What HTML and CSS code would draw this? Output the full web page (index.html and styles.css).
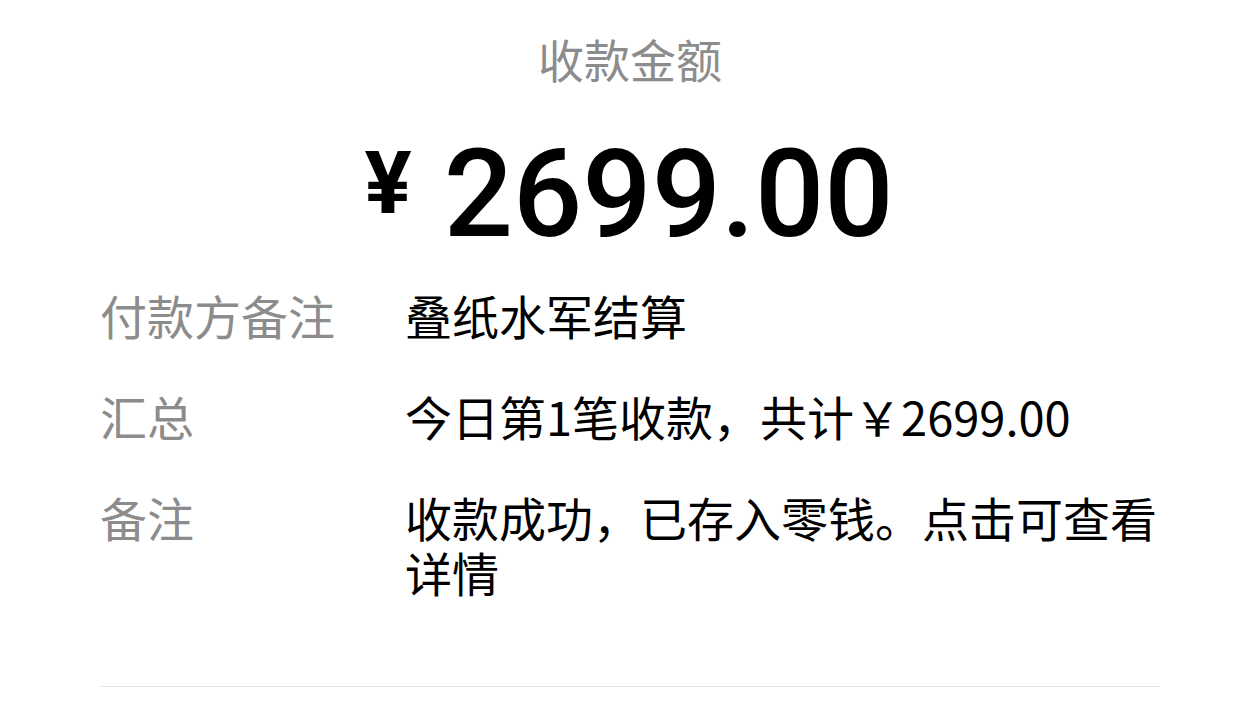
FILE: index.html
```html
<!DOCTYPE html>
<html lang="zh-CN">
<head>
  <meta charset="UTF-8">
  <meta name="viewport" content="width=device-width, initial-scale=1.0">
  <title>收款详情</title>
  <link rel="stylesheet" href="styles.css">
</head>
<body>
  <main class="receipt">
    <h1 class="receipt-title">收款金额</h1>

    <div class="amount">
      <span class="amount-sign">¥</span>
      <span class="amount-value">2699.00</span>
    </div>

    <dl class="details">
      <div class="detail-row">
        <dt>付款方备注</dt>
        <dd>叠纸水军结算</dd>
      </div>
      <div class="detail-row">
        <dt>汇总</dt>
        <dd>今日第1笔收款，共计￥2699.00</dd>
      </div>
      <div class="detail-row">
        <dt>备注</dt>
        <dd>收款成功，已存入零钱。点击可查看详情</dd>
      </div>
    </dl>

    <hr class="divider">
  </main>
</body>
</html>
```

FILE: styles.css
```css
body {
  margin: 0;
  background: #fff;
  color: #000;
  font-family: "Noto Sans CJK SC", "Noto Sans", sans-serif;
}
.receipt {
  padding: 26px 100px 0;
}
.receipt-title {
  margin: 0;
  text-align: center;
  font-size: 46px;
  font-weight: 400;
  line-height: 64px;
  color: #8c8c8c;
}
.amount {
  display: flex;
  justify-content: center;
  align-items: flex-start;
  gap: 32px;
  margin-top: 44px;
  margin-right: 2px;
}
.amount-sign {
  font-family: Roboto, "Noto Sans", sans-serif;
  font-weight: 700;
  font-size: 88px;
  line-height: 1;
  margin-top: 5px;
}
.amount-value {
  font-family: Roboto, "Noto Sans", sans-serif;
  font-weight: 500;
  font-size: 122px;
  line-height: 1;
}
.details {
  margin: 8px 0 0;
}
.detail-row {
  display: grid;
  grid-template-columns: 305px 1fr;
  padding: 23px 0;
  font-size: 47px;
  line-height: 55px;
}
.detail-row dt {
  color: #8c8c8c;
}
.detail-row dd {
  margin: 0;
}
.divider {
  margin: 64px 0 0;
  border: 0;
  border-top: 1px solid #e5e5e5;
}
```
